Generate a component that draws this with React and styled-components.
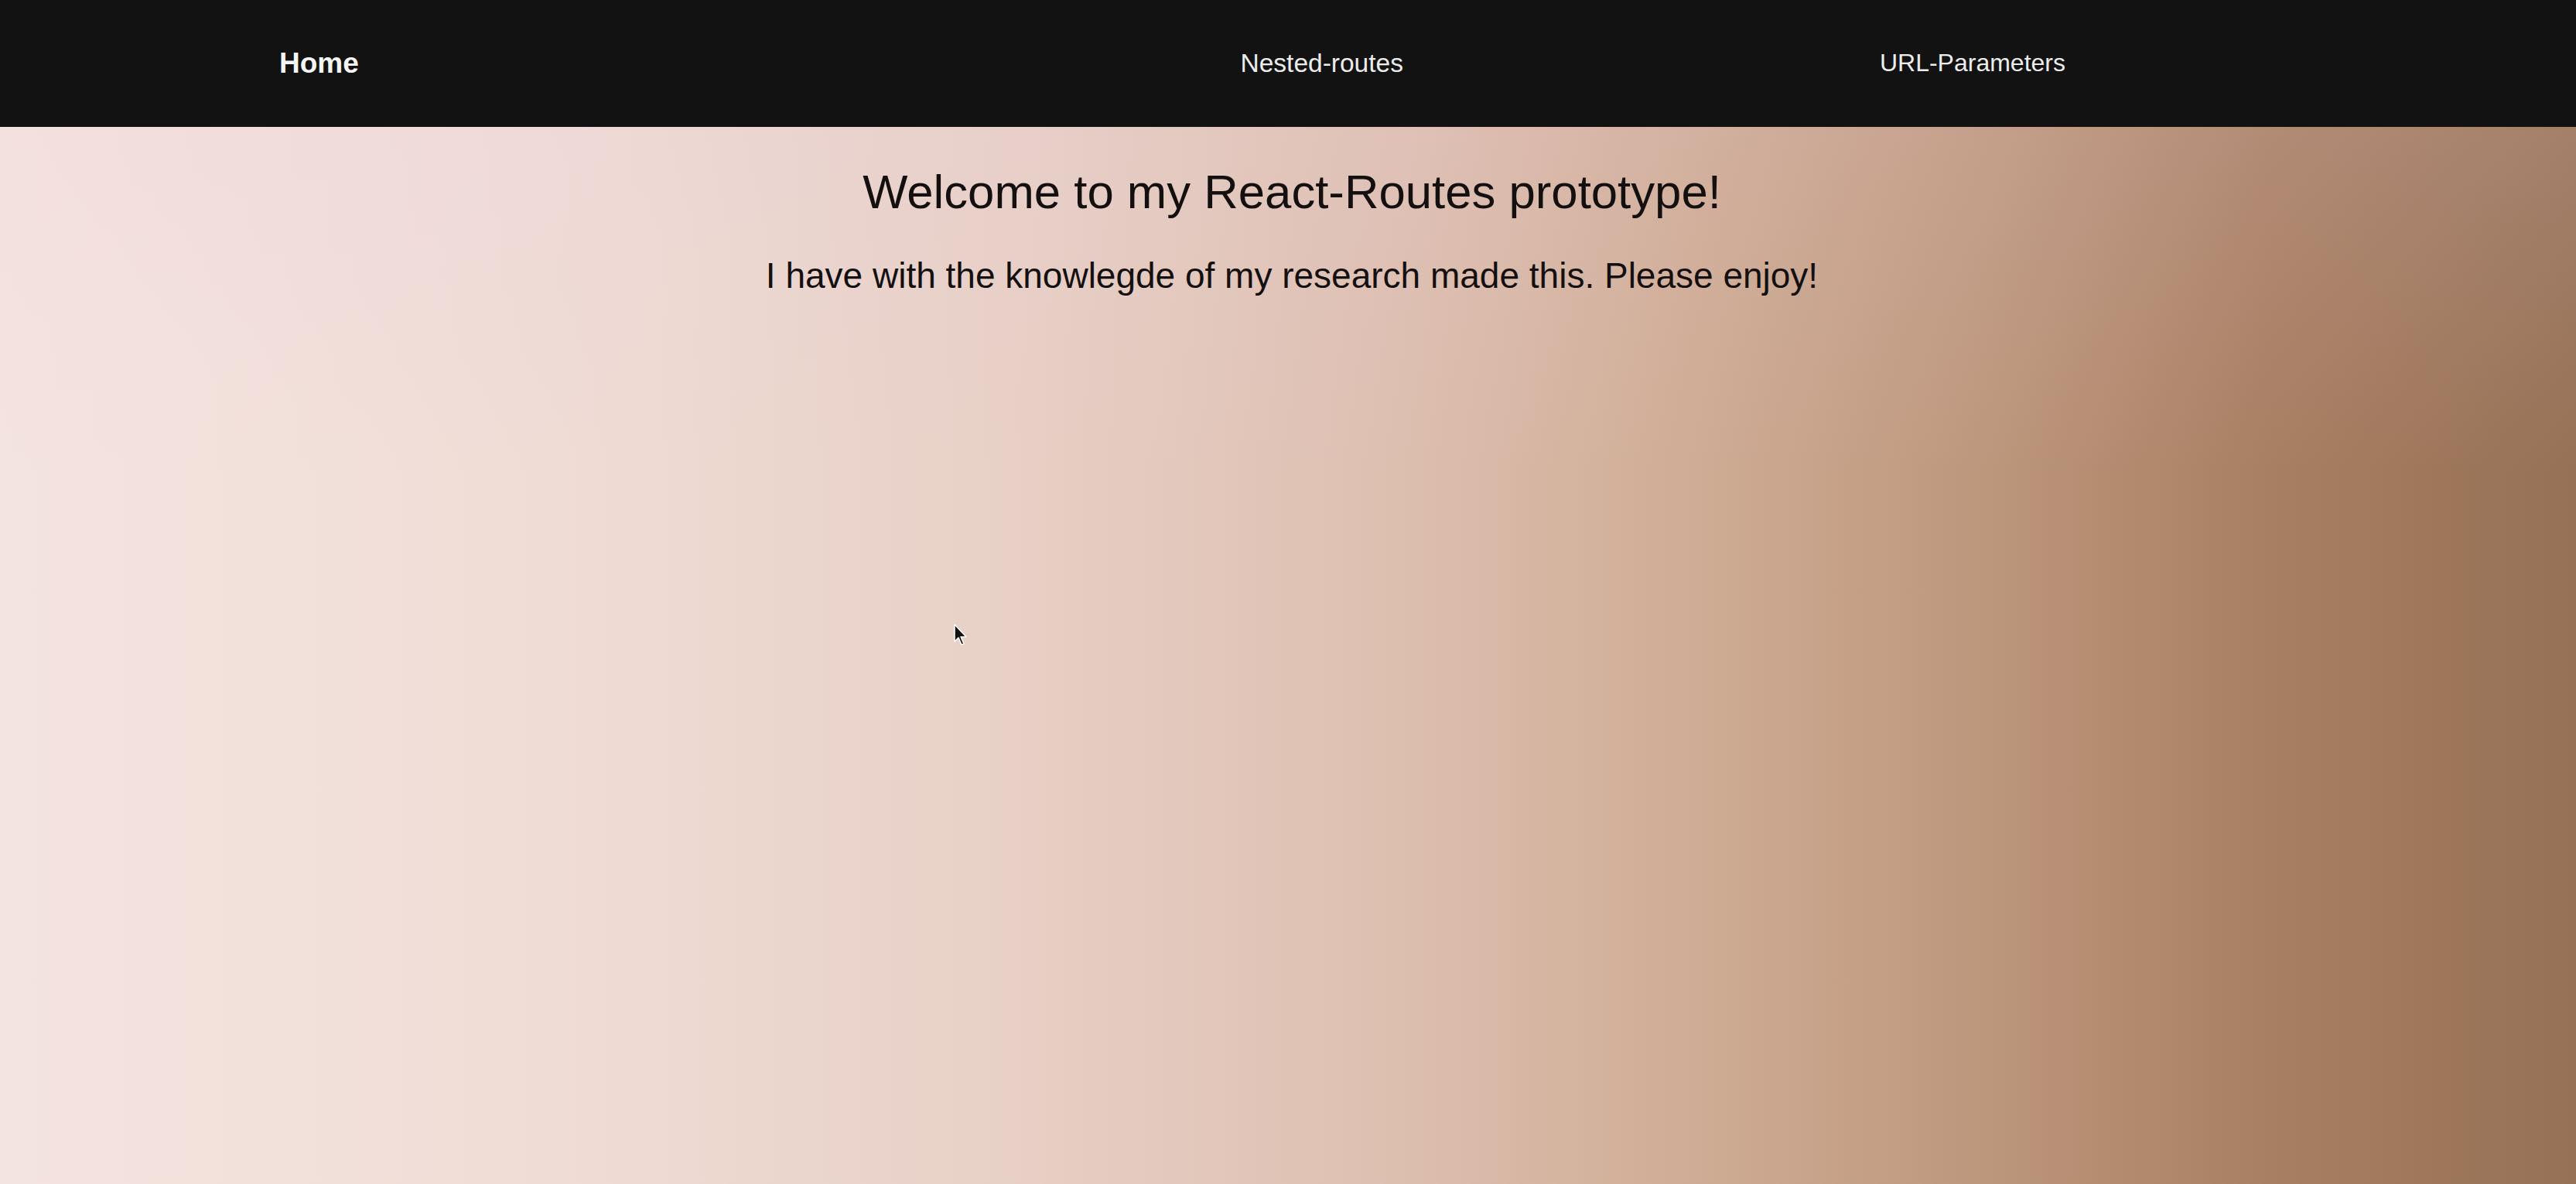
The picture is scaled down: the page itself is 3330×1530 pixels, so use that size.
import React from 'react'
import styled, { createGlobalStyle } from 'styled-components'

const GlobalStyle = createGlobalStyle`
    * { box-sizing: border-box; }
    body {
        margin: 0;
        font-family: "Liberation Sans", Arial, sans-serif;
    }
`

const Page = styled.div`
    position: relative;
    min-height: 100vh;
    display: flex;
    flex-direction: column;
    background:
        linear-gradient(180deg, rgba(235, 205, 220, 0.22) 0%, rgba(235, 205, 220, 0) 40%),
        linear-gradient(90deg, #f4e4df 0%, #efdcd5 22%, #e7cfc5 40%, #dcbeae 55%, #d0ad96 65%, #bd977c 77%, #a87f62 88%, #967155 100%);
`

const Nav = styled.nav`
    height: 164px;
    background-color: #121212;
    display: flex;
    align-items: center;
    padding: 0 660px 0 361px;
`

const Brand = styled.a`
    color: #f5f5f5;
    font-size: 37px;
    font-weight: 700;
    text-decoration: none;
`

const Links = styled.div`
    display: flex;
    gap: 616px;
    margin-left: auto;
`

const NavLink = styled.a`
    color: #ececec;
    font-size: ${({ size }) => size}px;
    text-decoration: none;
`

const Content = styled.main`
    display: flex;
    flex-direction: column;
    align-items: center;
    padding-left: 10px;
    color: #141010;
`

const Title = styled.h1`
    margin: 48px 0 0;
    font-size: 61.7px;
    font-weight: 400;
    line-height: 71px;
`

const SubTitle = styled.p`
    margin: 47px 0 0;
    font-size: 46px;
    line-height: 53px;
`

const Cursor = styled.svg`
    position: absolute;
    left: 1232px;
    top: 805px;
    width: 20px;
    height: 30px;
`

const App = () => {
  return (
    <Page>
        <GlobalStyle />
        <Nav>
            <Brand href="#">Home</Brand>
            <Links>
                <NavLink href="#" size={33.5}>Nested-routes</NavLink>
                <NavLink href="#" size={32}>URL-Parameters</NavLink>
            </Links>
        </Nav>
        <Content>
            <Title>Welcome to my React-Routes prototype!</Title>
            <SubTitle>I have with the knowlegde of my research made this. Please enjoy!</SubTitle>
        </Content>
        <Cursor viewBox="0 0 20 30">
            <path d="M2 2 L2 24 L7 19 L11 28 L14 27 L10 18 L17 18 Z" fill="#111" stroke="#fff" strokeWidth="1.5" strokeLinejoin="round" />
        </Cursor>
    </Page>
  )
}

export default App
